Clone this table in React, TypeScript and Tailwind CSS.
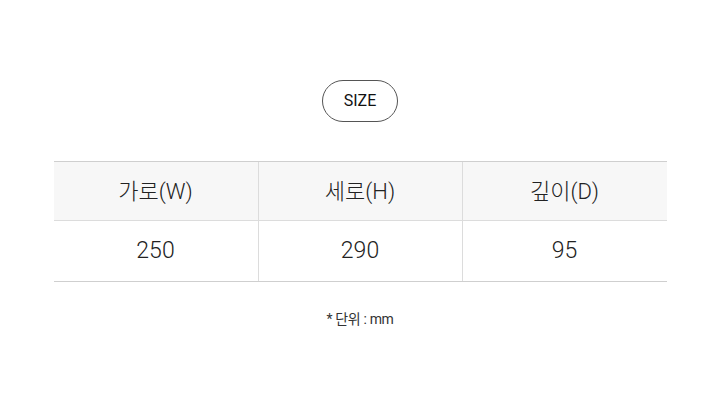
export default function App() {
  const font = { fontFamily: 'Roboto, "Noto Sans CJK KR", sans-serif' };
  return (
    <div className="w-[720px] h-[410px] bg-white flex flex-col items-center text-[#222]" style={font}>
      <div className="mt-[80px] w-[76px] h-[42px] rounded-full border border-[#555] flex items-center justify-center text-[16px] font-normal text-[#111]">
        SIZE
      </div>
      <div className="mt-[39px] w-[613px] border-t border-[#cfcfcf]">
        <div className="grid grid-cols-[205px_204px_204px] h-[59px] bg-[#f7f7f7] border-b border-[#dcdcdc] text-[22px] font-light">
          <div className="flex items-center justify-center border-r border-[#dcdcdc]">가로(W)</div>
          <div className="flex items-center justify-center border-r border-[#dcdcdc]">세로(H)</div>
          <div className="flex items-center justify-center">깊이(D)</div>
        </div>
        <div className="grid grid-cols-[205px_204px_204px] h-[61px] border-b border-[#cfcfcf] text-[23px] font-light">
          <div className="flex items-center justify-center border-r border-[#dcdcdc]">250</div>
          <div className="flex items-center justify-center border-r border-[#dcdcdc]">290</div>
          <div className="flex items-center justify-center">95</div>
        </div>
      </div>
      <div className="mt-[27px] text-[14px] tracking-tight text-[#333]">* 단위 : mm</div>
    </div>
  );
}
